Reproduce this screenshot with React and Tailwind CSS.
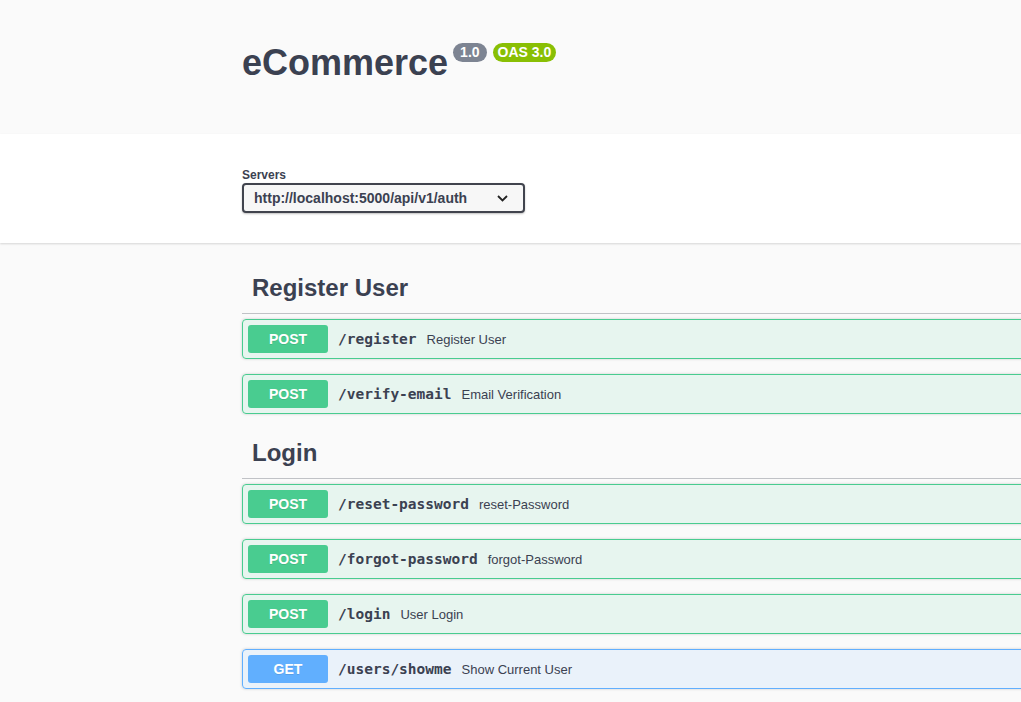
const SANS = { fontFamily: '"Liberation Sans", Arial, sans-serif' };
const MONO = { fontFamily: '"DejaVu Sans Mono", monospace' };

const sections = [
  {
    name: "Register User",
    ops: [
      { method: "POST", path: "/register", summary: "Register User" },
      { method: "POST", path: "/verify-email", summary: "Email Verification" },
    ],
  },
  {
    name: "Login",
    ops: [
      { method: "POST", path: "/reset-password", summary: "reset-Password" },
      { method: "POST", path: "/forgot-password", summary: "forgot-Password" },
      { method: "POST", path: "/login", summary: "User Login" },
      { method: "GET", path: "/users/showme", summary: "Show Current User" },
    ],
  },
];

function OpBlock({ op }) {
  const get = op.method === "GET";
  return (
    <div
      className={`mb-[15px] flex h-[40px] items-center rounded-[4px] border p-[5px] shadow-[0_0_3px_rgba(0,0,0,0.19)] ${
        get ? "border-[#61affe] bg-[#61affe]/10" : "border-[#49cc90] bg-[#49cc90]/10"
      }`}
    >
      <div
        className={`flex h-[28px] w-[80px] shrink-0 items-center justify-center rounded-[3px] text-[14px] font-bold text-white [text-shadow:0_1px_0_rgba(0,0,0,0.1)] ${
          get ? "bg-[#61affe]" : "bg-[#49cc90]"
        }`}
      >
        {op.method}
      </div>
      <span className="ml-[10px] pt-[2px] text-[14.5px] font-bold text-[#3b4151]" style={MONO}>
        {op.path}
      </span>
      <span className="ml-[10px] pt-[1px] text-[13px] text-[#3b4151]">{op.summary}</span>
    </div>
  );
}

export default function App() {
  return (
    <div className="min-h-screen w-[1021px] overflow-hidden bg-[#fafafa] text-[#3b4151]" style={SANS}>
      {/* INFO */}
      <div className="h-[134px] bg-[#fafafa] pt-[42px] pl-[242px]">
        <div className="flex items-start">
          <h1 className="text-[36px] font-bold leading-[41px] text-[#3b4151]">eCommerce</h1>
          <span className="mt-[1px] ml-[5px] flex h-[19px] items-center rounded-full bg-[#7d8492] px-[7px] text-[14px] font-bold text-white">
            1.0
          </span>
          <span className="mt-[1px] ml-[6px] flex h-[19px] items-center rounded-full bg-[#89bf04] px-[5px] text-[14px] font-bold text-white">
            OAS 3.0
          </span>
        </div>
      </div>

      {/* SERVERS */}
      <div className="h-[109px] bg-white pt-[34px] pl-[242px] shadow-[0_1px_2px_0_rgba(0,0,0,0.15)]">
        <div className="text-[12px] font-bold leading-[14px] text-[#3b4151]">Servers</div>
        <div className="mt-[1px] flex h-[30px] w-[283px] items-center justify-between rounded-[4px] border-2 border-[#41444e] bg-[#f7f7f7] pr-[15px] pl-[10px] shadow-[0_1px_2px_0_rgba(0,0,0,0.25)]">
          <span className="text-[14px] font-bold text-[#3b4151]">http://localhost:5000/api/v1/auth</span>
          <svg width="11" height="7" viewBox="0 0 11 7" fill="none">
            <path d="M1 1l4.5 4.5L10 1" stroke="#222" strokeWidth="1.8" />
          </svg>
        </div>
      </div>

      {/* TAGS */}
      <main className="ml-[242px] w-[1400px] pt-[21px]">
        {sections.map((s, i) => (
          <section key={s.name} className={i > 0 ? "mt-[1px]" : ""}>
            <h3 className="mb-[5px] border-b border-[#3b4151]/30 pt-[10px] pr-[20px] pb-[11px] pl-[10px] text-[24px] font-bold leading-[28px] text-[#3b4151]">
              {s.name}
            </h3>
            {s.ops.map((op) => (
              <OpBlock key={op.path} op={op} />
            ))}
          </section>
        ))}
      </main>
    </div>
  );
}
